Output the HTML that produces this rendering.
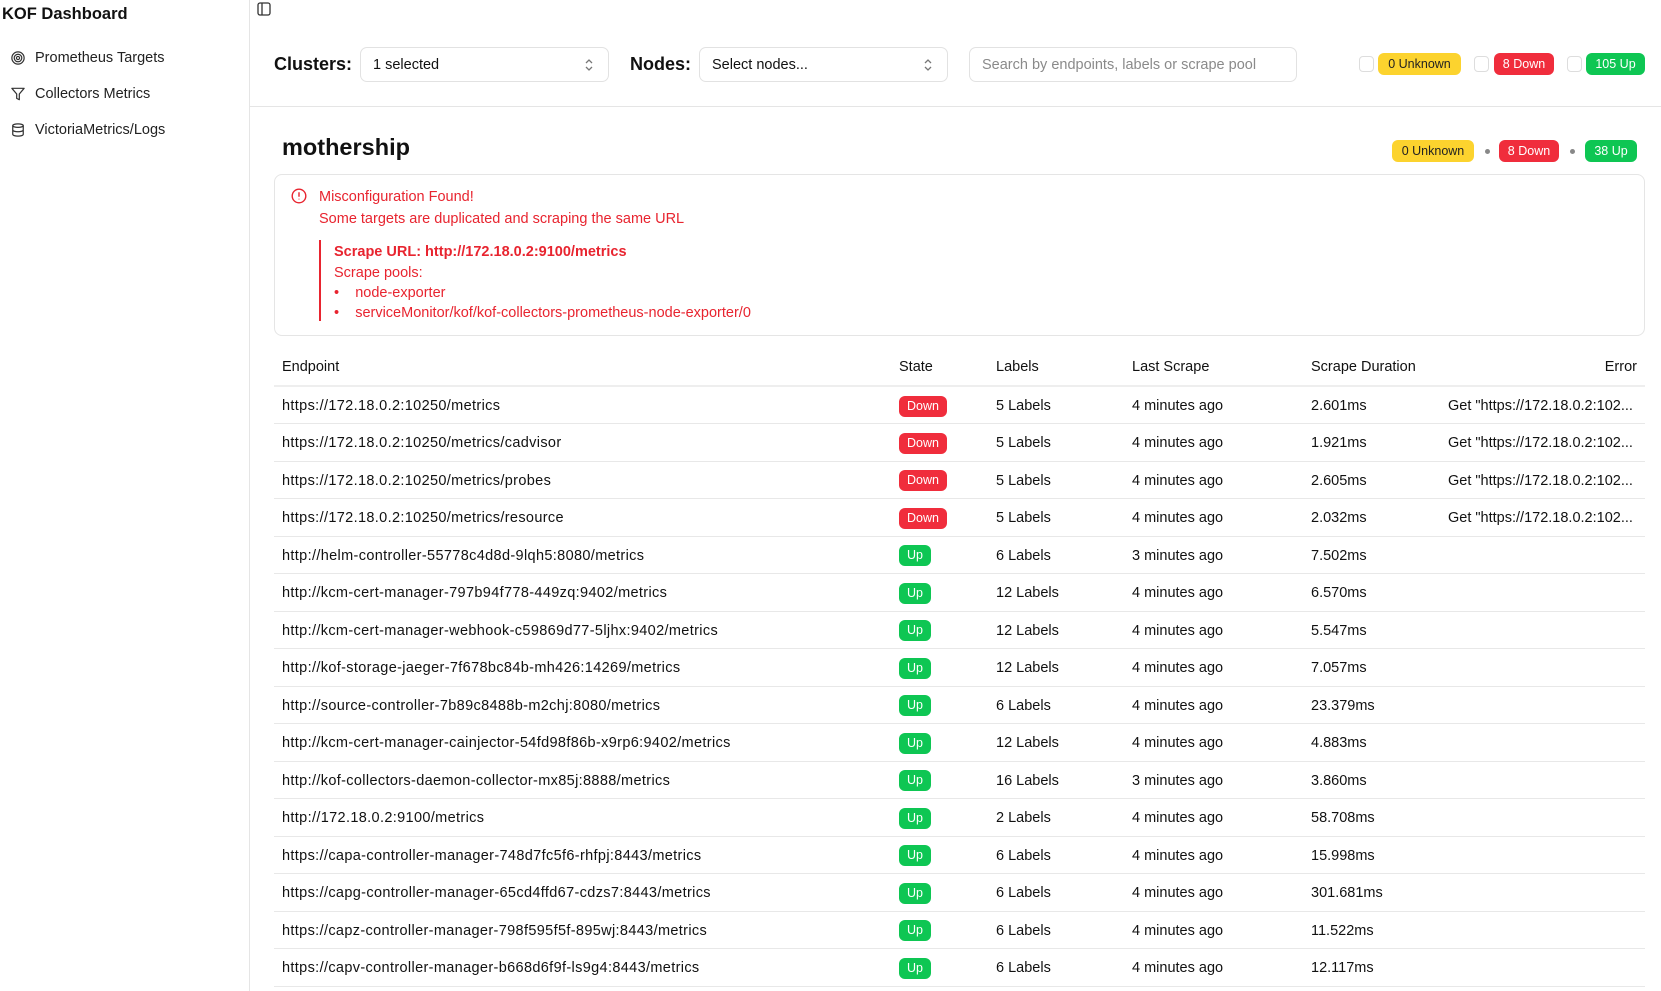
<!DOCTYPE html>
<html><head><meta charset="utf-8"><style>
*{box-sizing:border-box;margin:0;padding:0}
body{width:1661px;height:991px;overflow:hidden;background:#fff;font-family:"Liberation Sans",sans-serif;color:#111;font-size:14.5px;position:relative}
.abs{position:absolute}
.side{left:0;top:0;width:250px;height:991px;border-right:1px solid #e5e5e5}
.nav{position:absolute;left:11px;display:flex;align-items:center;gap:10px;font-size:14.5px;color:#222}
.nav svg{width:14px;height:14px}
.sel{position:absolute;top:47px;height:35px;border:1px solid #e2e2e2;border-radius:7px;display:flex;align-items:center;padding-left:12px;font-size:14.5px}
.sel .ch{position:absolute;right:14px;top:9px}
.badge{position:absolute;border-radius:6px;font-size:12.5px;display:flex;align-items:center;justify-content:center}
.y{background:#fcd32e;color:#222}.r{background:#f02d3c;color:#fff}.g{background:#0ec653;color:#fff}
.cb{position:absolute;width:15px;height:16px;border:1px solid #ddd;border-radius:4px;top:56px}
.red{color:#e8242f}
table{position:absolute;left:274px;top:349px;width:1371px;border-collapse:collapse;font-size:14.5px}
th{font-weight:normal;text-align:left;height:37px;border-bottom:2px solid #eee;padding-top:0}
td{height:37.5px;border-bottom:1px solid #e8e8e8;padding-top:2px}
td:first-child,th:first-child{padding-left:8px}
td:first-child{letter-spacing:0.35px}
.st{display:inline-block;border-radius:6px;font-size:12.5px;color:#fff;padding:3px 8px;line-height:15px}
</style></head><body>
<div class="abs side"></div>
<div class="abs" style="left:2px;top:5px;font-weight:bold;font-size:16.5px">KOF Dashboard</div>
<div class="nav" style="top:50px"><svg viewBox="0 0 16 16" fill="none" stroke="#333" stroke-width="1.4"><circle cx="8" cy="8" r="7"/><circle cx="8" cy="8" r="4.3"/><circle cx="8" cy="8" r="1.8"/></svg>Prometheus Targets</div>
<div class="nav" style="top:86px"><svg viewBox="0 0 16 16" fill="none" stroke="#333" stroke-width="1.4" stroke-linejoin="round"><path d="M1 1.5h14L9.5 8v6.5l-3-1.5V8z"/></svg>Collectors Metrics</div>
<div class="nav" style="top:122px"><svg viewBox="0 0 16 16" fill="none" stroke="#333" stroke-width="1.4"><ellipse cx="8" cy="3" rx="6" ry="2"/><path d="M2 3v10c0 1.1 2.7 2 6 2s6-.9 6-2V3M2 8c0 1.1 2.7 2 6 2s6-.9 6-2"/></svg>VictoriaMetrics/Logs</div>
<svg class="abs" style="left:257px;top:2px" width="14" height="14" viewBox="0 0 14 14" fill="none" stroke="#333" stroke-width="1.3"><rect x="1" y="1" width="12" height="12" rx="2"/><path d="M5 1v12"/></svg>

<div class="abs" style="left:274px;top:54px;font-weight:bold;font-size:18px">Clusters:</div>
<div class="sel" style="left:360px;width:249px">1 selected<svg class="ch" width="10" height="16" viewBox="0 0 10 16" fill="none" stroke="#777" stroke-width="1.3"><path d="M2 6l3-3 3 3M2 10l3 3 3-3"/></svg></div>
<div class="abs" style="left:630px;top:54px;font-weight:bold;font-size:18px">Nodes:</div>
<div class="sel" style="left:699px;width:249px">Select nodes...<svg class="ch" width="10" height="16" viewBox="0 0 10 16" fill="none" stroke="#777" stroke-width="1.3"><path d="M2 6l3-3 3 3M2 10l3 3 3-3"/></svg></div>
<div class="sel" style="left:969px;width:328px;color:#8a8a8a">Search by endpoints, labels or scrape pool</div>
<div class="cb" style="left:1359px"></div><div class="badge y" style="left:1378px;top:53px;width:83px;height:22px">0 Unknown</div>
<div class="cb" style="left:1474px"></div><div class="badge r" style="left:1494px;top:53px;width:60px;height:22px">8 Down</div>
<div class="cb" style="left:1567px"></div><div class="badge g" style="left:1586px;top:53px;width:59px;height:22px">105 Up</div>
<div class="abs" style="left:250px;top:106px;width:1411px;border-top:1px solid #e5e5e5"></div>

<div class="abs" style="left:282px;top:134px;font-weight:bold;font-size:23.5px">mothership</div>
<div class="badge y" style="left:1392px;top:140px;width:82px;height:22px">0 Unknown</div>
<div class="abs" style="left:1485px;top:149px;width:5px;height:5px;border-radius:50%;background:#888"></div>
<div class="badge r" style="left:1499px;top:140px;width:60px;height:22px">8 Down</div>
<div class="abs" style="left:1570px;top:149px;width:5px;height:5px;border-radius:50%;background:#888"></div>
<div class="badge g" style="left:1585px;top:140px;width:52px;height:22px">38 Up</div>

<div class="abs" style="left:274px;top:174px;width:1371px;height:162px;border:1px solid #e5e5e5;border-radius:8px"></div>
<svg class="abs" style="left:291px;top:188px" width="16" height="16" viewBox="0 0 16 16" fill="none" stroke="#e8242f" stroke-width="1.4"><circle cx="8" cy="8" r="6.8"/><path d="M8 4.3v4.4M8 10.8v.6"/></svg>
<div class="abs red" style="left:319px;top:189px">Misconfiguration Found!</div>
<div class="abs red" style="left:319px;top:211px">Some targets are duplicated and scraping the same URL</div>
<div class="abs" style="left:319px;top:240px;width:2px;height:81px;background:#e8242f"></div>
<div class="abs red" style="left:334px;top:244px;font-weight:bold">Scrape URL: http://172.18.0.2:9100/metrics</div>
<div class="abs red" style="left:334px;top:265px">Scrape pools:</div>
<div class="abs red" style="left:334px;top:285px">•&nbsp;&nbsp;&nbsp;&nbsp;node-exporter</div>
<div class="abs red" style="left:334px;top:305px">•&nbsp;&nbsp;&nbsp;&nbsp;serviceMonitor/kof/kof-collectors-prometheus-node-exporter/0</div>

<table>
<colgroup><col style="width:625px"><col style="width:97px"><col style="width:136px"><col style="width:179px"><col style="width:137px"><col></colgroup>
<tr><th>Endpoint</th><th>State</th><th>Labels</th><th>Last Scrape</th><th>Scrape Duration</th><th style="text-align:right;padding-right:8px">Error</th></tr>
<tr><td>https://172.18.0.2:10250/metrics</td><td><span class="st r">Down</span></td><td>5 Labels</td><td>4 minutes ago</td><td>2.601ms</td><td>Get "https://172.18.0.2:102...</td></tr>
<tr><td>https://172.18.0.2:10250/metrics/cadvisor</td><td><span class="st r">Down</span></td><td>5 Labels</td><td>4 minutes ago</td><td>1.921ms</td><td>Get "https://172.18.0.2:102...</td></tr>
<tr><td>https://172.18.0.2:10250/metrics/probes</td><td><span class="st r">Down</span></td><td>5 Labels</td><td>4 minutes ago</td><td>2.605ms</td><td>Get "https://172.18.0.2:102...</td></tr>
<tr><td>https://172.18.0.2:10250/metrics/resource</td><td><span class="st r">Down</span></td><td>5 Labels</td><td>4 minutes ago</td><td>2.032ms</td><td>Get "https://172.18.0.2:102...</td></tr>
<tr><td>http://helm-controller-55778c4d8d-9lqh5:8080/metrics</td><td><span class="st g">Up</span></td><td>6 Labels</td><td>3 minutes ago</td><td>7.502ms</td><td></td></tr>
<tr><td>http://kcm-cert-manager-797b94f778-449zq:9402/metrics</td><td><span class="st g">Up</span></td><td>12 Labels</td><td>4 minutes ago</td><td>6.570ms</td><td></td></tr>
<tr><td>http://kcm-cert-manager-webhook-c59869d77-5ljhx:9402/metrics</td><td><span class="st g">Up</span></td><td>12 Labels</td><td>4 minutes ago</td><td>5.547ms</td><td></td></tr>
<tr><td>http://kof-storage-jaeger-7f678bc84b-mh426:14269/metrics</td><td><span class="st g">Up</span></td><td>12 Labels</td><td>4 minutes ago</td><td>7.057ms</td><td></td></tr>
<tr><td>http://source-controller-7b89c8488b-m2chj:8080/metrics</td><td><span class="st g">Up</span></td><td>6 Labels</td><td>4 minutes ago</td><td>23.379ms</td><td></td></tr>
<tr><td>http://kcm-cert-manager-cainjector-54fd98f86b-x9rp6:9402/metrics</td><td><span class="st g">Up</span></td><td>12 Labels</td><td>4 minutes ago</td><td>4.883ms</td><td></td></tr>
<tr><td>http://kof-collectors-daemon-collector-mx85j:8888/metrics</td><td><span class="st g">Up</span></td><td>16 Labels</td><td>3 minutes ago</td><td>3.860ms</td><td></td></tr>
<tr><td>http://172.18.0.2:9100/metrics</td><td><span class="st g">Up</span></td><td>2 Labels</td><td>4 minutes ago</td><td>58.708ms</td><td></td></tr>
<tr><td>https://capa-controller-manager-748d7fc5f6-rhfpj:8443/metrics</td><td><span class="st g">Up</span></td><td>6 Labels</td><td>4 minutes ago</td><td>15.998ms</td><td></td></tr>
<tr><td>https://capg-controller-manager-65cd4ffd67-cdzs7:8443/metrics</td><td><span class="st g">Up</span></td><td>6 Labels</td><td>4 minutes ago</td><td>301.681ms</td><td></td></tr>
<tr><td>https://capz-controller-manager-798f595f5f-895wj:8443/metrics</td><td><span class="st g">Up</span></td><td>6 Labels</td><td>4 minutes ago</td><td>11.522ms</td><td></td></tr>
<tr><td>https://capv-controller-manager-b668d6f9f-ls9g4:8443/metrics</td><td><span class="st g">Up</span></td><td>6 Labels</td><td>4 minutes ago</td><td>12.117ms</td><td></td></tr>
</table>
</body></html>
